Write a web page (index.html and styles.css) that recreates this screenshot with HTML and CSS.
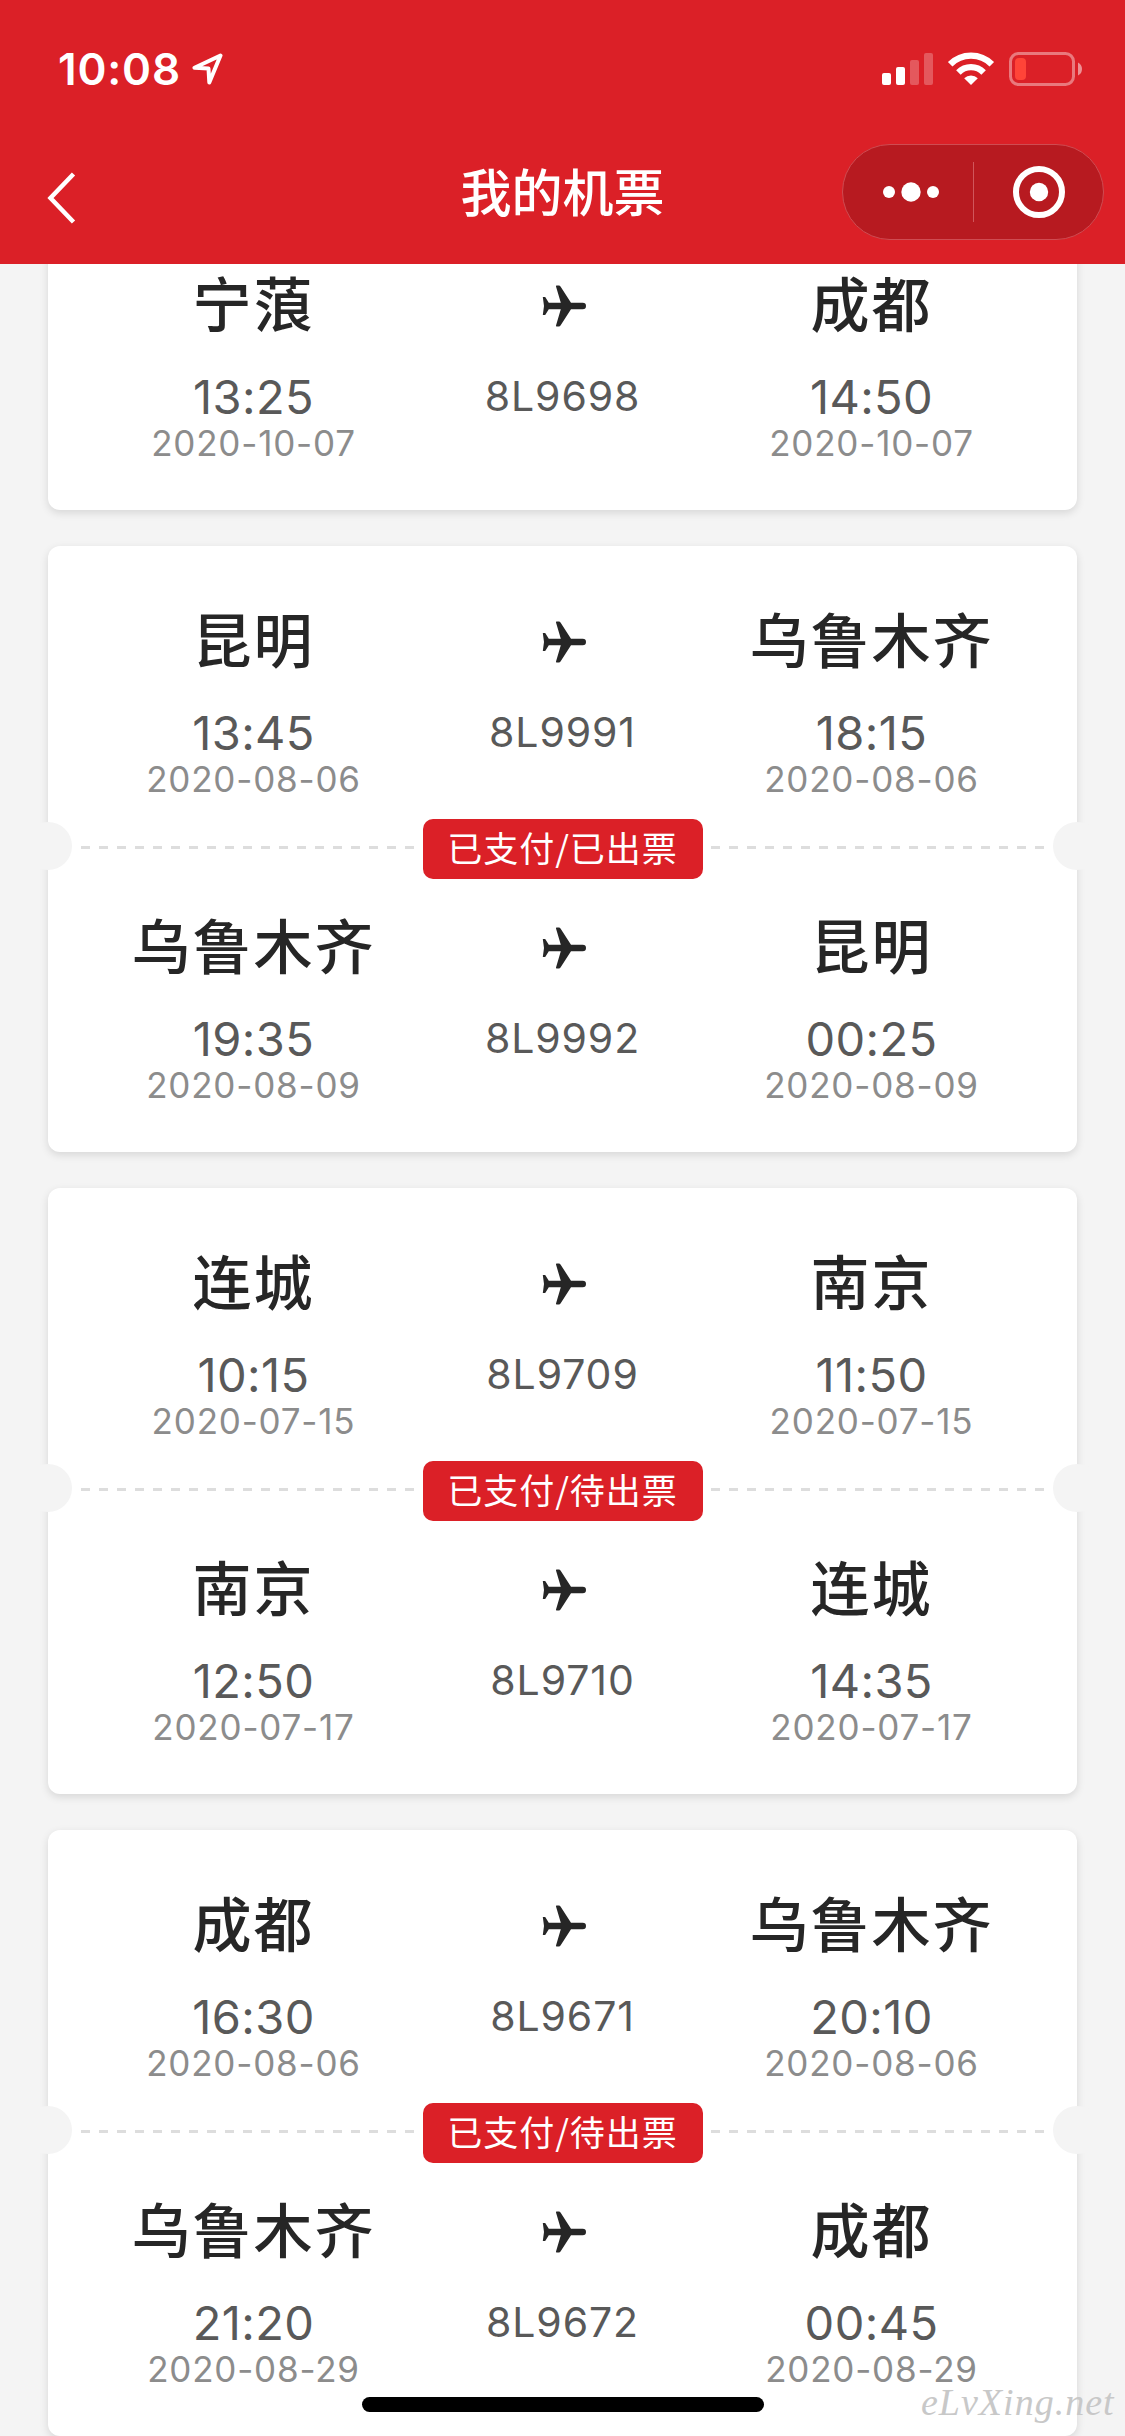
FILE: index.html
```html
<!DOCTYPE html>
<html lang="zh-CN">
<head>
<meta charset="utf-8">
<title>我的机票</title>
<link rel="stylesheet" href="styles.css">
</head>
<body>
<svg class="defs" width="0" height="0" aria-hidden="true">
  <symbol id="plane" viewBox="0 0 44 42">
    <path d="M.8 12h2.400L6.800 17.700h12L14 1.600Q13.700.6 14.700.6h2.200q1 0 1.600.9L29 17.700h11.700a3.300 3.300 0 0 1 0 6.600H29L18.500 40.500q-.6.9-1.600.9h-2.200q-1 0-.7-1l4.800-16.100h-12L3.200 30H.8L2 21z"/>
  </symbol>
</svg>
<header class="header">
  <div class="status">
    <div class="status-left">
      <span class="clock">10:08</span>
      <svg class="locate" width="31" height="32" viewBox="0 0 31 32"><path d="M28.500 2.500 2.500 14.800l14 .7.8 14z"/></svg>
    </div>
    <svg class="indicators" width="202" height="36" viewBox="0 0 202 36">
      <g fill="#fff">
        <rect x="2" y="22" width="9" height="12" rx="2"/>
        <rect x="16" y="16" width="9" height="18" rx="2"/>
        <g opacity=".25"><rect x="30" y="9" width="9" height="25" rx="2"/><rect x="44" y="2" width="9" height="32" rx="2"/></g>
        <path d="M91 34l-6.800-6.800a9.600 9.600 0 0 1 13.600 0z"/>
      </g>
      <g fill="none" stroke="#fff" stroke-width="6.400">
        <path d="M70.200 13.200a29.400 29.400 0 0 1 41.600 0"/>
        <path d="M78.400 21.400a17.800 17.800 0 0 1 25.200 0"/>
      </g>
      <rect x="130.500" y="2.500" width="63" height="31" rx="8" fill="none" stroke="#fff" stroke-opacity=".4" stroke-width="3"/>
      <path d="M198 11.500q4 2 4 6.500t-4 6.500z" fill="#fff" fill-opacity=".5"/>
      <rect x="135" y="7" width="11" height="22" rx="4" fill="#ff4438"/>
    </svg>
  </div>
  <div class="nav">
    <svg class="back" width="30" height="54" viewBox="0 0 30 54"><path d="M26.500 3 3.500 27l23 24"/></svg>
    <h1 class="title">我的机票</h1>
    <div class="capsule">
      <svg width="48" height="22" viewBox="0 0 48 22"><circle cx="7" cy="11" r="6"/><circle cx="29" cy="11" r="9.700"/><circle cx="51" cy="11" r="6"/></svg>
      <i class="capsule-line"></i>
      <svg width="54" height="54" viewBox="0 0 54 54"><circle cx="27" cy="27" r="23" fill="none" stroke="#fff" stroke-width="6"/><circle cx="27" cy="27" r="9.200"/></svg>
    </div>
  </div>
</header>
<main class="list">
  <section class="card">
    <div class="leg">
      <div class="stop"><b class="city">宁蒗</b><span class="time">13:25</span><span class="date">2020-10-07</span></div>
      <div class="flight"><svg class="plane"><use href="#plane"/></svg><span class="number">8L9698</span></div>
      <div class="stop"><b class="city">成都</b><span class="time">14:50</span><span class="date">2020-10-07</span></div>
    </div>
  </section>
  <section class="card">
    <div class="leg">
      <div class="stop"><b class="city">昆明</b><span class="time">13:45</span><span class="date">2020-08-06</span></div>
      <div class="flight"><svg class="plane"><use href="#plane"/></svg><span class="number">8L9991</span></div>
      <div class="stop"><b class="city">乌鲁木齐</b><span class="time">18:15</span><span class="date">2020-08-06</span></div>
    </div>
    <div class="divider"><span class="badge">已支付/已出票</span></div>
    <div class="leg">
      <div class="stop"><b class="city">乌鲁木齐</b><span class="time">19:35</span><span class="date">2020-08-09</span></div>
      <div class="flight"><svg class="plane"><use href="#plane"/></svg><span class="number">8L9992</span></div>
      <div class="stop"><b class="city">昆明</b><span class="time">00:25</span><span class="date">2020-08-09</span></div>
    </div>
  </section>
  <section class="card">
    <div class="leg">
      <div class="stop"><b class="city">连城</b><span class="time">10:15</span><span class="date">2020-07-15</span></div>
      <div class="flight"><svg class="plane"><use href="#plane"/></svg><span class="number">8L9709</span></div>
      <div class="stop"><b class="city">南京</b><span class="time">11:50</span><span class="date">2020-07-15</span></div>
    </div>
    <div class="divider"><span class="badge">已支付/待出票</span></div>
    <div class="leg">
      <div class="stop"><b class="city">南京</b><span class="time">12:50</span><span class="date">2020-07-17</span></div>
      <div class="flight"><svg class="plane"><use href="#plane"/></svg><span class="number">8L9710</span></div>
      <div class="stop"><b class="city">连城</b><span class="time">14:35</span><span class="date">2020-07-17</span></div>
    </div>
  </section>
  <section class="card">
    <div class="leg">
      <div class="stop"><b class="city">成都</b><span class="time">16:30</span><span class="date">2020-08-06</span></div>
      <div class="flight"><svg class="plane"><use href="#plane"/></svg><span class="number">8L9671</span></div>
      <div class="stop"><b class="city">乌鲁木齐</b><span class="time">20:10</span><span class="date">2020-08-06</span></div>
    </div>
    <div class="divider"><span class="badge">已支付/待出票</span></div>
    <div class="leg">
      <div class="stop"><b class="city">乌鲁木齐</b><span class="time">21:20</span><span class="date">2020-08-29</span></div>
      <div class="flight"><svg class="plane"><use href="#plane"/></svg><span class="number">8L9672</span></div>
      <div class="stop"><b class="city">成都</b><span class="time">00:45</span><span class="date">2020-08-29</span></div>
    </div>
  </section>
</main>
<div class="home-bar"></div>
<div class="watermark">eLvXing.net</div>
</body>
</html>
```
FILE: styles.css
```css
* { box-sizing: border-box; }

body {
  position: relative;
  width: 1125px;
  height: 2436px;
  margin: 0;
  overflow: hidden;
  background: #f4f4f4;
  font-family: Inter, "Noto Sans CJK SC", sans-serif;
  color: #262626;
}

.defs { position: absolute; }

.header {
  position: relative;
  z-index: 1;
  height: 264px;
  background: #db2027;
  color: #fff;
}

.status {
  display: flex;
  justify-content: space-between;
  align-items: center;
  height: 138px;
  padding: 0 43px 0 58px;
}

.status-left {
  display: flex;
  align-items: center;
  gap: 11px;
}

.clock {
  font-size: 44px;
  font-weight: 600;
  letter-spacing: 0.8px;
}

.locate {
  fill: none;
  stroke: #fff;
  stroke-width: 4;
  stroke-linejoin: round;
}

.nav {
  display: grid;
  grid-template-columns: 262px 1fr 262px;
  align-items: center;
  height: 108px;
  padding: 0 21px;
}

.back {
  margin: 12px 0 0 26px;
  fill: none;
  stroke: #fff;
  stroke-width: 4.5;
}

.title {
  margin: 0;
  padding-bottom: 4px;
  text-align: center;
  font: 500 51px/72px "Noto Sans CJK SC", sans-serif;
}

.capsule {
  display: flex;
  align-items: center;
  height: 96px;
  padding-left: 39px;
  background: #b71a20;
  border: 1px solid #cf4c52;
  border-radius: 48px;
}

.capsule svg { fill: #fff; overflow: visible; }

.capsule-line {
  width: 1px;
  height: 60px;
  margin: 0 38px 0 43px;
  background: #d0565b;
}

.list {
  display: flex;
  flex-direction: column;
  gap: 36px;
  margin-top: -54px;
  padding: 0 48px;
}

.card {
  background: #fff;
  border-radius: 12px;
  box-shadow: 0 3px 9px rgba(0, 0, 0, .12);
}

.leg {
  display: grid;
  grid-template-columns: repeat(3, 309px);
  height: 300px;
  padding: 50px 51px 0;
}

.stop, .flight {
  display: flex;
  flex-direction: column;
  align-items: center;
  white-space: nowrap;
}

.city {
  margin-bottom: 25px;
  font: 500 59px/84px "Noto Sans CJK SC", sans-serif;
  letter-spacing: 2px;
}

.time {
  font-size: 47px;
  line-height: 56px;
  letter-spacing: 0.4px;
  color: #595959;
}

.date {
  font-size: 35px;
  line-height: 36px;
  letter-spacing: 0.8px;
  color: #8c8c8c;
}

.plane {
  width: 44px;
  height: 42px;
  margin: 25px 0 42px 2px;
  fill: #262626;
}

.number {
  font-size: 41px;
  line-height: 54px;
  letter-spacing: 0.9px;
  color: #595959;
}

.divider {
  position: relative;
  display: flex;
  justify-content: center;
  align-items: center;
  height: 6px;
  background: repeating-linear-gradient(90deg, #ddd 0 9px, transparent 9px 18px) 33px 0 / 963px 3px no-repeat;
}

.divider::before,
.divider::after {
  content: "";
  position: absolute;
  top: -24px;
  width: 48px;
  height: 48px;
  border-radius: 50%;
  background: #f4f4f4;
}

.divider::before { left: -24px; }
.divider::after { right: -24px; }

.badge {
  flex: none;
  width: 280px;
  height: 60px;
  border-radius: 10px;
  background: #db2027;
  color: #fff;
  font: 400 35px/56px "Noto Sans CJK SC", sans-serif;
  letter-spacing: 1px;
  text-align: center;
}

.home-bar {
  position: absolute;
  left: 362px;
  bottom: 24px;
  width: 402px;
  height: 15px;
  border-radius: 8px;
  background: #000;
}

.watermark {
  position: absolute;
  left: 921px;
  top: 2378px;
  font: italic 38px/48px "Liberation Serif", serif;
  letter-spacing: 1px;
  color: #c8c8c8;
}
```
